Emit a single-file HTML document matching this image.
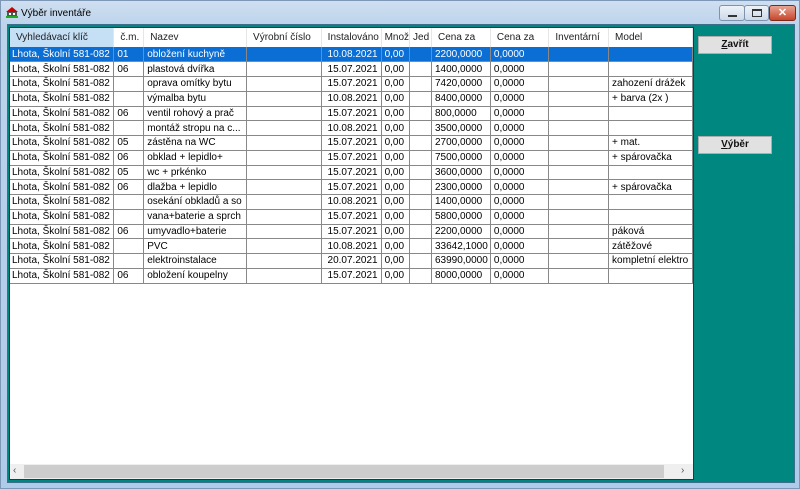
<!DOCTYPE html>
<html><head><meta charset="utf-8"><style>
*{margin:0;padding:0;box-sizing:border-box}
body{width:800px;height:489px;overflow:hidden;background:#b9d1ea;font-family:"Liberation Sans",sans-serif;font-size:10px;position:relative}
.frame{position:absolute;left:0;top:0;width:800px;height:489px;background:linear-gradient(#cfdff0,#bcd3ec 25px,#aecbea);border:1px solid #7d98b6}
.title{position:absolute;left:21px;top:8px;font-size:10px;color:#000}
.icon{position:absolute;left:6px;top:7px;width:12px;height:11px}
.client{position:absolute;left:7px;top:24px;width:788px;height:459px;background:#00877f;border:1px solid #3b6e8a}
.grid{position:absolute;left:9px;top:27px;width:685px;height:453px;background:#fff;border:1px solid #333;overflow:hidden}
table{border-collapse:collapse;table-layout:fixed;position:absolute;left:0;top:0}
th{height:19px;font-weight:normal;text-align:left;padding-left:6px;color:#222;border-right:1px solid #e6e6e6;white-space:nowrap;overflow:hidden;background:#fff}
th.first{background:#c5dff5}
td{height:14.75px;border:1px solid #888;border-top:none;border-left:none;padding-left:3px;white-space:nowrap;overflow:hidden;color:#000;line-height:13px}
td:first-child{padding-left:2px}
td.r{text-align:right;padding-right:3px}
tr.sel td{background:#0a6ed4;color:#fff}
.sb{position:absolute;left:0;top:436px;width:683px;height:16px;background:#efefef}
.sb .th{position:absolute;left:14px;top:1px;width:640px;height:13px;background:#cdcdcd}
.sb span{position:absolute;top:1px;font-size:10px;color:#555}
.btn{position:absolute;left:698px;width:74px;height:18px;background:#e1e1e1;border:1px solid #adadad;font-size:10px;font-weight:bold;text-align:center;line-height:16px;color:#111}
.ctl{position:absolute;top:5px;height:16px;border:1px solid #7f93ad;border-radius:3px;background:linear-gradient(#eef3f9,#cbd9ea)}
</style></head><body>
<div class="frame"></div>
<svg class="icon" viewBox="0 0 12 11"><rect x="1" y="4" width="10" height="7" fill="#555"/><polygon points="0,5 6,0 12,5" fill="#c00"/><rect x="3" y="6" width="2" height="2" fill="#fff"/><rect x="7" y="6" width="2" height="2" fill="#fff"/><rect x="0" y="9" width="12" height="2" fill="#2a2"/></svg>
<div class="title">Výběr inventáře</div>
<div class="ctl" style="left:719px;width:26px"><div style="position:absolute;left:8px;top:9px;width:9px;height:2px;background:#333"></div></div>
<div class="ctl" style="left:744px;width:25px"><div style="position:absolute;left:7px;top:3px;width:10px;height:8px;border:1px solid #333;border-top-width:2px"></div></div>
<div class="ctl" style="left:769px;width:27px;background:linear-gradient(#e8a493,#c7462c);border-color:#7a2a1a;color:#fff;font-weight:bold;text-align:center;font-size:11px;line-height:14px">✕</div>
<div class="client"></div>
<div class="grid">
<table>
<colgroup><col style="width:104px"><col style="width:30px"><col style="width:103px"><col style="width:75px"><col style="width:60px"><col style="width:28px"><col style="width:22px"><col style="width:59px"><col style="width:59px"><col style="width:60px"><col style="width:84px"></colgroup>
<tr><th class="first">Vyhledávací klíč</th><th>č.m.</th><th>Nazev</th><th>Výrobní číslo</th><th>Instalováno</th><th style="padding-left:3px">Množ</th><th style="padding-left:3px">Jed</th><th>Cena za</th><th>Cena za</th><th>Inventární</th><th>Model</th></tr>
<tr class="sel"><td>Lhota, Školní 581-082</td><td>01</td><td>obložení kuchyně</td><td></td><td class="r">10.08.2021</td><td>0,00</td><td></td><td>2200,0000</td><td>0,0000</td><td></td><td></td></tr>
<tr><td>Lhota, Školní 581-082</td><td>06</td><td>plastová dvířka</td><td></td><td class="r">15.07.2021</td><td>0,00</td><td></td><td>1400,0000</td><td>0,0000</td><td></td><td></td></tr>
<tr><td>Lhota, Školní 581-082</td><td></td><td>oprava omítky bytu</td><td></td><td class="r">15.07.2021</td><td>0,00</td><td></td><td>7420,0000</td><td>0,0000</td><td></td><td>zahození drážek</td></tr>
<tr><td>Lhota, Školní 581-082</td><td></td><td>výmalba bytu</td><td></td><td class="r">10.08.2021</td><td>0,00</td><td></td><td>8400,0000</td><td>0,0000</td><td></td><td>+ barva (2x )</td></tr>
<tr><td>Lhota, Školní 581-082</td><td>06</td><td>ventil rohový a prač</td><td></td><td class="r">15.07.2021</td><td>0,00</td><td></td><td>800,0000</td><td>0,0000</td><td></td><td></td></tr>
<tr><td>Lhota, Školní 581-082</td><td></td><td>montáž stropu na c...</td><td></td><td class="r">10.08.2021</td><td>0,00</td><td></td><td>3500,0000</td><td>0,0000</td><td></td><td></td></tr>
<tr><td>Lhota, Školní 581-082</td><td>05</td><td>zástěna na WC</td><td></td><td class="r">15.07.2021</td><td>0,00</td><td></td><td>2700,0000</td><td>0,0000</td><td></td><td>+ mat.</td></tr>
<tr><td>Lhota, Školní 581-082</td><td>06</td><td>obklad + lepidlo+</td><td></td><td class="r">15.07.2021</td><td>0,00</td><td></td><td>7500,0000</td><td>0,0000</td><td></td><td>+ spárovačka</td></tr>
<tr><td>Lhota, Školní 581-082</td><td>05</td><td>wc + prkénko</td><td></td><td class="r">15.07.2021</td><td>0,00</td><td></td><td>3600,0000</td><td>0,0000</td><td></td><td></td></tr>
<tr><td>Lhota, Školní 581-082</td><td>06</td><td>dlažba + lepidlo</td><td></td><td class="r">15.07.2021</td><td>0,00</td><td></td><td>2300,0000</td><td>0,0000</td><td></td><td>+ spárovačka</td></tr>
<tr><td>Lhota, Školní 581-082</td><td></td><td>osekání obkladů a so</td><td></td><td class="r">10.08.2021</td><td>0,00</td><td></td><td>1400,0000</td><td>0,0000</td><td></td><td></td></tr>
<tr><td>Lhota, Školní 581-082</td><td></td><td>vana+baterie a sprch</td><td></td><td class="r">15.07.2021</td><td>0,00</td><td></td><td>5800,0000</td><td>0,0000</td><td></td><td></td></tr>
<tr><td>Lhota, Školní 581-082</td><td>06</td><td>umyvadlo+baterie</td><td></td><td class="r">15.07.2021</td><td>0,00</td><td></td><td>2200,0000</td><td>0,0000</td><td></td><td>páková</td></tr>
<tr><td>Lhota, Školní 581-082</td><td></td><td>PVC</td><td></td><td class="r">10.08.2021</td><td>0,00</td><td></td><td>33642,1000</td><td>0,0000</td><td></td><td>zátěžové</td></tr>
<tr><td>Lhota, Školní 581-082</td><td></td><td>elektroinstalace</td><td></td><td class="r">20.07.2021</td><td>0,00</td><td></td><td>63990,0000</td><td>0,0000</td><td></td><td>kompletní elektro</td></tr>
<tr><td>Lhota, Školní 581-082</td><td>06</td><td>obložení koupelny</td><td></td><td class="r">15.07.2021</td><td>0,00</td><td></td><td>8000,0000</td><td>0,0000</td><td></td><td></td></tr>
</table>
<div class="sb"><div class="th"></div><span style="left:3px">‹</span><span style="left:671px">›</span></div>
</div>
<div class="btn" style="top:36px"><u>Z</u>avřít</div>
<div class="btn" style="top:136px"><u>V</u>ýběr</div>
</body></html>
